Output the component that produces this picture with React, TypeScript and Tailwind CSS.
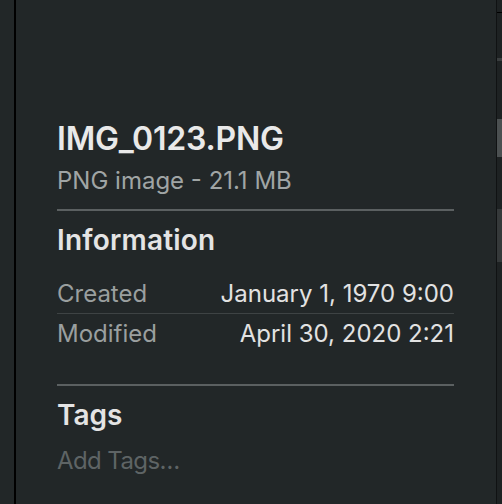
import React from 'react';

const rows = [
  { label: 'Created', value: 'January 1, 1970 9:00' },
  { label: 'Modified', value: 'April 30, 2020 2:21' },
];

export default function App() {
  return (
    <div className="flex h-[504px] w-[502px] bg-[#222728] font-['Inter',sans-serif] antialiased overflow-hidden">
      <div className="w-[14px] shrink-0 bg-[#222728]" />
      <div className="w-[2px] shrink-0 bg-black" />
      <div className="flex-1 pl-[41px] pr-[42px] pt-[119px]">
        <div className="text-[32px] leading-[40px] font-semibold text-[#e9e9e9] tracking-[-0.2px]">IMG_0123.PNG</div>
        <div className="mt-[7px] text-[24px] leading-[30px] text-[#a0a5a5]">PNG image - 21.1 MB</div>
        <div className="mt-[13px] h-[2px] bg-[#5b6061]" />
        <div className="mt-[12px] text-[28px] leading-[34px] font-semibold text-[#e4e4e4] tracking-[0.2px]">Information</div>
        <div className="mt-[17px]">
          {rows.map((r, i) => (
            <div key={r.label}>
              {i > 0 && <div className="h-[1px] bg-[#3e4344]" />}
              <div className={`flex justify-between items-center text-[24px] leading-[30px] ${i === 0 ? 'h-[39px]' : 'h-[40px]'}`}>
                <span className="text-[#9a9f9f]">{r.label}</span>
                <span className="text-[#e2e2e2]">{r.value}</span>
              </div>
            </div>
          ))}
        </div>
        <div className="mt-[30px] h-[2px] bg-[#5b6061]" />
        <div className="mt-[12px] text-[28px] leading-[34px] font-semibold text-[#e4e4e4]">Tags</div>
        <div className="mt-[14px] text-[24px] leading-[30px] text-[#5e6465] tracking-[-0.6px]">Add Tags…</div>
      </div>
      <div className="w-[1px] shrink-0 bg-[#101213]" />
      <div className="w-[5px] shrink-0 bg-[#1e2223] flex flex-col">
        <div className="h-[12px]" />
        <div className="h-[1px] bg-black" />
        <div className="h-[45px]" />
        <div className="h-[3px] bg-[#3a3e3f]" />
        <div className="h-[58px]" />
        <div className="h-[38px] bg-[#4b5051]" />
        <div className="h-[52px]" />
        <div className="h-[53px] bg-[#35393a]" />
      </div>
    </div>
  );
}
